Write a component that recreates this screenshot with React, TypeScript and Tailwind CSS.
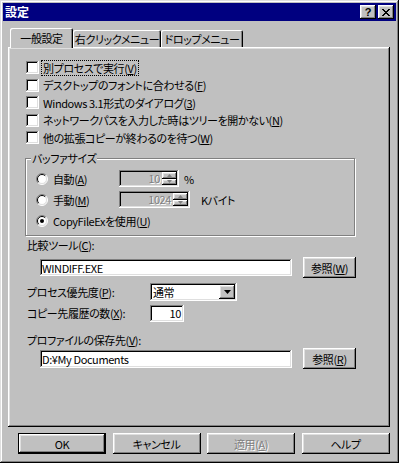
import React from 'react';

const FONT = "font-['Noto_Sans_CJK_JP',sans-serif] [font-feature-settings:'palt'] text-[11px] tracking-[-0.4px] leading-[14px] text-black";
const FRAME = 'shadow-[inset_-1px_-1px_#000000,inset_1px_1px_#dfdfdf,inset_-2px_-2px_#808080,inset_2px_2px_#ffffff]';
const RAISED = 'shadow-[inset_-1px_-1px_#000000,inset_1px_1px_#ffffff,inset_-2px_-2px_#808080,inset_2px_2px_#dfdfdf]';
const SUNKEN = 'shadow-[inset_-1px_-1px_#ffffff,inset_1px_1px_#808080,inset_-2px_-2px_#dfdfdf,inset_2px_2px_#000000]';
const TAB = 'shadow-[inset_1px_1px_#ffffff,inset_-1px_0_#000000,inset_-2px_0_#808080] rounded-t-[2px]';
const DISABLED = 'text-[#808080] [text-shadow:1px_1px_0_#ffffff]';

// accelerator key, e.g. (V) with the letter underlined
const Acc = ({ k }: { k: string }) => (
  <>
    (<span className="underline underline-offset-[1px]">{k}</span>)
  </>
);

const CheckRow = ({ children, focused = false }: { children: React.ReactNode; focused?: boolean }) => (
  <div className="flex h-[17.5px] items-center">
    <span className={`h-[13px] w-[13px] shrink-0 bg-white ${SUNKEN}`} />
    <span className={`ml-[2px] border border-dotted px-[1px] ${focused ? 'border-black' : 'border-transparent'}`}>
      {children}
    </span>
  </div>
);

const Radio = ({ checked = false }: { checked?: boolean }) => (
  <svg width="12" height="12" viewBox="0 0 12 12" className="shrink-0">
    <circle cx="6" cy="6" r="5" fill="#ffffff" />
    <path d="M2.1 9.9 A5.5 5.5 0 0 1 9.9 2.1" stroke="#808080" fill="none" />
    <path d="M2.8 9.2 A4.5 4.5 0 0 1 9.2 2.8" stroke="#000000" fill="none" />
    <path d="M9.9 2.1 A5.5 5.5 0 0 1 2.1 9.9" stroke="#ffffff" fill="none" />
    <path d="M9.2 2.8 A4.5 4.5 0 0 1 2.8 9.2" stroke="#dfdfdf" fill="none" />
    {checked && <circle cx="6" cy="6" r="2" fill="#000000" />}
  </svg>
);

const SpinArrow = ({ up = false }: { up?: boolean }) => (
  <svg width="5" height="3" viewBox="0 0 5 3">
    <path d={up ? 'M2.5 0 L5 3 L0 3Z' : 'M0 0 L5 0 L2.5 3Z'} fill="#808080" />
  </svg>
);

const Spin = ({ value, w }: { value: string; w: string }) => (
  <div className={`flex h-[17px] ${w} items-stretch p-[2px] ${SUNKEN}`}>
    <span className={`flex-1 pr-[2px] text-right leading-[13px] ${DISABLED}`}>{value}</span>
    <div className="flex w-[15px] flex-col">
      <div className={`flex flex-1 items-center justify-center ${RAISED}`}>
        <SpinArrow up />
      </div>
      <div className={`flex flex-1 items-center justify-center ${RAISED}`}>
        <SpinArrow />
      </div>
    </div>
  </div>
);

const Field = ({ value, w, h = 'h-[18px]', right = false }: { value: string; w: string; h?: string; right?: boolean }) => (
  <div className={`flex ${h} ${w} items-center bg-white ${SUNKEN} ${right ? 'justify-end pr-[3px]' : 'pl-[2px]'}`}>
    {value}
  </div>
);

const Button = ({
  children,
  w = 'w-[88px]',
  isDefault = false,
  disabled = false,
}: {
  children: React.ReactNode;
  w?: string;
  isDefault?: boolean;
  disabled?: boolean;
}) => {
  const face = `flex h-full w-full items-center justify-center ${RAISED} ${disabled ? DISABLED : ''}`;
  if (isDefault) {
    return (
      <div className={`h-[21px] ${w} shrink-0 border border-black`}>
        <div className={face}>{children}</div>
      </div>
    );
  }
  return (
    <div className={`h-[21px] ${w} shrink-0`}>
      <div className={face}>{children}</div>
    </div>
  );
};

const CloseGlyph = () => (
  <svg width="8" height="7" viewBox="0 0 8 7" shapeRendering="crispEdges">
    <path
      d="M0 0h2v1H0z M6 0h2v1H6z M1 1h2v1H1z M5 1h2v1H5z M2 2h4v1H2z M3 3h2v1H3z M2 4h4v1H2z M1 5h2v1H1z M5 5h2v1H5z M0 6h2v1H0z M6 6h2v1H6z"
      fill="#000000"
    />
  </svg>
);

export default function App() {
  return (
    <div className={`flex h-[463px] w-[399px] flex-col bg-[#c0c0c0] p-[3px] ${FRAME} ${FONT}`}>
      {/* Title bar */}
      <div className="flex h-[18px] shrink-0 items-center bg-[#000080] pl-[2px] pr-[2px]">
        <span className="flex-1 text-[12px] font-bold tracking-normal text-white">設定</span>
        <div className="flex gap-[2px]">
          <div className={`flex h-[14px] w-[16px] items-center justify-center bg-[#c0c0c0] ${RAISED}`}>
            <span className="font-['Liberation_Sans',sans-serif] text-[11px] font-bold leading-[11px]">?</span>
          </div>
          <div className={`flex h-[14px] w-[16px] items-center justify-center bg-[#c0c0c0] ${RAISED}`}>
            <CloseGlyph />
          </div>
        </div>
      </div>

      {/* Tabs */}
      <div className="relative z-10 ml-[5px] mt-[7px] flex h-[19px] shrink-0 items-end pl-[2px]">
        <div className={`-mb-px flex h-[20px] w-[63px] items-center justify-center bg-[#c0c0c0] ${TAB}`}>一般設定</div>
        <div className={`flex h-[17px] w-[88px] items-center justify-center ${TAB}`}>右クリックメニュー</div>
        <div className={`flex h-[17px] w-[82px] items-center justify-center ${TAB}`}>ドロップメニュー</div>
      </div>

      {/* Tab panel */}
      <div className={`ml-[5px] flex h-[380px] w-[382px] shrink-0 flex-col pl-[17px] pt-[12px] ${RAISED}`}>
        <div className="ml-[1px] flex flex-col">
          <CheckRow focused>
            別プロセスで実行<Acc k="V" />
          </CheckRow>
          <CheckRow>
            デスクトップのフォントに合わせる<Acc k="F" />
          </CheckRow>
          <CheckRow>
            Windows 3.1形式のダイアログ<Acc k="3" />
          </CheckRow>
          <CheckRow>
            ネットワークパスを入力した時はツリーを開かない<Acc k="N" />
          </CheckRow>
          <CheckRow>
            他の拡張コピーが終わるのを待つ<Acc k="W" />
          </CheckRow>
        </div>

        {/* Buffer size group */}
        <div className="relative mt-[11.5px] h-[78px] w-[330px] border border-[#808080] pl-[10px] pt-[9px] shadow-[inset_1px_1px_#ffffff,1px_1px_#ffffff]">
          <span className="absolute left-[5px] top-[-8px] bg-[#c0c0c0] px-[1px]">バッファサイズ</span>
          <div className="flex h-[21px] items-center">
            <div className="flex w-[83px] items-center">
              <Radio />
              <span className="ml-[5px]">
                自動<Acc k="A" />
              </span>
            </div>
            <Spin value="10" w="w-[60px]" />
            <span className="ml-[5px]">%</span>
          </div>
          <div className="flex h-[21px] items-center">
            <div className="flex w-[83px] items-center">
              <Radio />
              <span className="ml-[5px]">
                手動<Acc k="M" />
              </span>
            </div>
            <Spin value="1024" w="w-[71px]" />
            <span className="ml-[11px]">Kバイト</span>
          </div>
          <div className="flex h-[21px] items-center">
            <Radio checked />
            <span className="ml-[5px]">
              CopyFileExを使用<Acc k="U" />
            </span>
          </div>
        </div>

        <div className="ml-[2px] mt-[1px] flex h-[16px] items-center">
          比較ツール<Acc k="C" />:
        </div>
        <div className="ml-[15px] mt-[4px] flex h-[21px] items-center">
          <Field value="WINDIFF.EXE" w="w-[252px]" h="h-[17px]" />
          <div className="ml-[11px]">
            <Button w="w-[53px]">
              参照<Acc k="W" />
            </Button>
          </div>
        </div>

        <div className="ml-[2px] mt-[4px] flex h-[20px] items-center">
          <span className="w-[123px]">
            プロセス優先度<Acc k="P" />:
          </span>
          <div className={`flex h-[18px] w-[87px] items-center bg-white p-[2px] ${SUNKEN}`}>
            <span className="flex-1 pl-[1px]">通常</span>
            <div className={`flex h-full w-[16px] items-center justify-center bg-[#c0c0c0] ${RAISED}`}>
              <svg width="7" height="4" viewBox="0 0 7 4">
                <path d="M0 0h7L3.5 4z" fill="#000000" />
              </svg>
            </div>
          </div>
        </div>
        <div className="ml-[2px] mt-[1px] flex h-[20px] items-center">
          <span className="w-[123px]">
            コピー先履歴の数<Acc k="X" />:
          </span>
          <Field value="10" w="w-[34px]" h="h-[17px]" right />
        </div>

        <div className="ml-[2px] mt-[9px] flex h-[16px] items-center">
          プロファイルの保存先<Acc k="V" />:
        </div>
        <div className="ml-[15px] flex h-[21px] items-center">
          <Field value="D:¥My Documents" w="w-[252px]" />
          <div className="ml-[11px]">
            <Button w="w-[53px]">
              参照<Acc k="R" />
            </Button>
          </div>
        </div>
      </div>

      {/* Dialog buttons */}
      <div className="ml-[15px] mt-[6px] flex gap-[6.5px]">
        <Button isDefault>OK</Button>
        <Button>キャンセル</Button>
        <Button disabled>
          適用<Acc k="A" />
        </Button>
        <Button>ヘルプ</Button>
      </div>
    </div>
  );
}
